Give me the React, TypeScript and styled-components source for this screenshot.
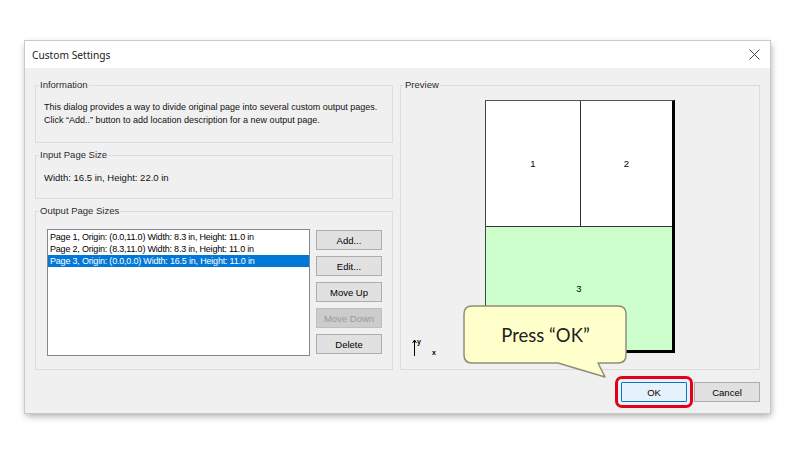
import React from "react";
import styled, { createGlobalStyle } from "styled-components";

const GlobalStyle = createGlobalStyle`
  html, body {
    margin: 0;
    padding: 0;
    background: #ffffff;
  }
  body {
    font-family: "Liberation Sans", Arial, sans-serif;
    color: #000;
  }
`;

const Page = styled.div`
  width: 800px;
  height: 455px;
  padding: 41px 0 0 25px;
  box-sizing: border-box;
`;

const Dialog = styled.div`
  position: relative;
  width: 745px;
  height: 372px;
  display: flex;
  flex-direction: column;
  background: #f0f0f0;
  box-shadow: 0 0 0 1px #c9c9c9, 1px 3px 7px rgba(0, 0, 0, 0.35);
`;

const TitleBar = styled.div`
  height: 27px;
  flex: none;
  display: flex;
  align-items: center;
  justify-content: space-between;
  padding: 0 10px 0 7px;
  background: #ffffff;
  font-family: "Noto Sans", "Open Sans", sans-serif;
  font-size: 10.2px;
  color: #1a1a1a;
`;

const Body = styled.div`
  flex: 1;
  display: flex;
  flex-direction: column;
  padding: 11px 10px 11px 10px;
  font-size: 9.5px;
`;

const MainRow = styled.div`
  height: 291px;
  display: flex;
  gap: 7px;
`;

const LeftColumn = styled.div`
  width: 358px;
  display: flex;
  flex-direction: column;
  gap: 6px;
`;

const Group = styled.fieldset<{ $h?: number; $pad: string; $padLeft: number }>`
  box-sizing: border-box;
  margin: 0;
  min-width: 0;
  border: 1px solid #dcdcdc;
  padding: ${(p) => p.$pad};
  padding-left: ${(p) => p.$padLeft}px;
  ${(p) => (p.$h ? `height: ${p.$h}px; flex: none;` : "flex: 1;")}
`;

const Legend = styled.legend<{ $padLeft: number }>`
  margin-left: ${(p) => 3 - p.$padLeft}px;
  padding: 0 1px;
  line-height: 12px;
  color: #2b2b2b;
`;

const Note = styled.p<{ $small?: boolean }>`
  margin: 0;
  line-height: 13px;
  white-space: nowrap;
  font-size: ${(p) => (p.$small ? "9px" : "9.5px")};
  color: #111;
`;

const OutputRow = styled.div`
  display: flex;
  gap: 6px;
  height: 100%;
`;

const ListBox = styled.ul`
  list-style: none;
  margin: 0;
  padding: 1px 0 0;
  width: 264px;
  height: 127px;
  box-sizing: border-box;
  border: 1px solid #828790;
  background: #fff;
`;

const ListItem = styled.li<{ $selected?: boolean }>`
  height: 12px;
  line-height: 12px;
  padding-left: 2px;
  white-space: nowrap;
  font-size: 9px;
  letter-spacing: -0.2px;
  background: ${(p) => (p.$selected ? "#0078d7" : "transparent")};
  color: ${(p) => (p.$selected ? "#fff" : "#000")};
`;

const ButtonColumn = styled.div`
  display: flex;
  flex-direction: column;
  gap: 6px;
  padding-top: 1px;
`;

const Button = styled.button<{ $primary?: boolean }>`
  width: 66px;
  height: 20px;
  padding: 0;
  font-family: "Liberation Sans", Arial, sans-serif;
  font-size: 9.5px;
  color: #000;
  background: ${(p) => (p.$primary ? "#e5f1fb" : "#e1e1e1")};
  border: 1px solid ${(p) => (p.$primary ? "#0078d7" : "#adadad")};
  border-radius: 0;

  &:disabled {
    background: #cccccc;
    border-color: #bfbfbf;
    color: #9a9a9a;
  }
`;

const HighlightedButton = styled(Button)`
  outline: 3px solid #e3001b;
  outline-offset: 3px;
  border-radius: 1px;
`;

const PreviewGrid = styled.div`
  display: grid;
  grid-template-columns: 1fr auto 1fr;
  padding-top: 9px;
`;

const PreviewPage = styled.div`
  width: 190px;
  height: 253px;
  box-sizing: border-box;
  display: grid;
  grid-template-columns: 94px 1fr;
  grid-template-rows: 125px 1fr;
  border-top: 1px solid #555;
  border-left: 1px solid #444;
  border-right: 3px solid #000;
  border-bottom: 3px solid #000;
  background: #fff;
`;

const Sheet = styled.div<{ $span?: boolean; $green?: boolean; $divider?: boolean }>`
  display: flex;
  align-items: center;
  justify-content: center;
  font-size: 9.5px;
  grid-column: ${(p) => (p.$span ? "1 / span 2" : "auto")};
  background: ${(p) => (p.$green ? "#ccffcc" : "#fff")};
  border-top: ${(p) => (p.$span ? "1px solid #333" : "none")};
  border-left: ${(p) => (p.$divider ? "1px solid #333" : "none")};
`;

const Axis = styled.div`
  align-self: end;
  display: flex;
  align-items: flex-end;
  padding-left: 3px;
  margin-bottom: -3px;
  font-size: 7px;
  font-weight: bold;
`;

const AxisY = styled.span`
  align-self: flex-start;
  margin: -1px 0 0 0;
`;

const AxisX = styled.span`
  margin-left: 11px;
  line-height: 7px;
`;

const Footer = styled.div`
  margin-top: 12px;
  display: flex;
  justify-content: flex-end;
  gap: 7px;
`;

const Callout = styled.div`
  position: absolute;
  left: 438px;
  top: 264px;
  width: 165px;
  height: 74px;
`;

const CalloutText = styled.span`
  position: absolute;
  left: 0;
  top: 0;
  width: 165px;
  height: 60px;
  display: flex;
  align-items: center;
  justify-content: center;
  font-family: Lato, "Open Sans", sans-serif;
  font-size: 18.5px;
  color: #222;
`;

const rows = [
  "Page 1, Origin: (0.0,11.0) Width: 8.3 in, Height: 11.0 in",
  "Page 2, Origin: (8.3,11.0) Width: 8.3 in, Height: 11.0 in",
  "Page 3, Origin: (0.0,0.0) Width: 16.5 in, Height: 11.0 in",
];

export default function App() {
  return (
    <>
      <GlobalStyle />
      <Page>
        <Dialog>
          <TitleBar>
            <span>Custom Settings</span>
            <svg width="11" height="11" viewBox="0 0 11 11">
              <path d="M0.5 0.5 L10.5 10.5 M10.5 0.5 L0.5 10.5" stroke="#444" strokeWidth="1" />
            </svg>
          </TitleBar>
          <Body>
            <MainRow>
              <LeftColumn>
                <Group $h={64} $pad="10px 8px 0" $padLeft={8}>
                  <Legend $padLeft={8}>Information</Legend>
                  <Note $small>
                    This dialog provides a way to divide original page into several custom output pages.
                    <br />
                    Click “Add..” button to add location description for a new output page.
                  </Note>
                </Group>
                <Group $h={50} $pad="10px 8px 0" $padLeft={8}>
                  <Legend $padLeft={8}>Input Page Size</Legend>
                  <Note>Width: 16.5 in, Height: 22.0 in</Note>
                </Group>
                <Group $pad="12px 10px 13px" $padLeft={11}>
                  <Legend $padLeft={11}>Output Page Sizes</Legend>
                  <OutputRow>
                    <ListBox>
                      {rows.map((r, i) => (
                        <ListItem key={r} $selected={i === 2}>
                          {r}
                        </ListItem>
                      ))}
                    </ListBox>
                    <ButtonColumn>
                      <Button>Add...</Button>
                      <Button>Edit...</Button>
                      <Button>Move Up</Button>
                      <Button disabled>Move Down</Button>
                      <Button>Delete</Button>
                    </ButtonColumn>
                  </OutputRow>
                </Group>
              </LeftColumn>
              <Group $pad="0 8px" $padLeft={8}>
                <Legend $padLeft={8}>Preview</Legend>
                <PreviewGrid>
                  <Axis>
                    <svg width="5" height="17" viewBox="0 0 5 17">
                      <path d="M2.5 1 L2.5 17 M0.5 4 L2.5 1 L4.5 4" stroke="#000" strokeWidth="1" fill="none" />
                    </svg>
                    <AxisY>y</AxisY>
                    <AxisX>x</AxisX>
                  </Axis>
                  <PreviewPage>
                    <Sheet>1</Sheet>
                    <Sheet $divider>2</Sheet>
                    <Sheet $span $green>
                      3
                    </Sheet>
                  </PreviewPage>
                </PreviewGrid>
              </Group>
            </MainRow>
            <Footer>
              <HighlightedButton $primary>OK</HighlightedButton>
              <Button>Cancel</Button>
            </Footer>
          </Body>
          <Callout>
            <svg width="165" height="74" viewBox="0 0 165 74">
              <path
                d="M8 1 H155 Q163 1 163 9 V50 Q163 58 155 58 H135 L142 72 L95 58 H9 Q1 58 1 50 V9 Q1 1 9 1 Z"
                fill="#ffffcc"
                stroke="#8e8e78"
                strokeWidth="1.5"
                strokeLinejoin="round"
              />
            </svg>
            <CalloutText>Press “OK”</CalloutText>
          </Callout>
        </Dialog>
      </Page>
    </>
  );
}
